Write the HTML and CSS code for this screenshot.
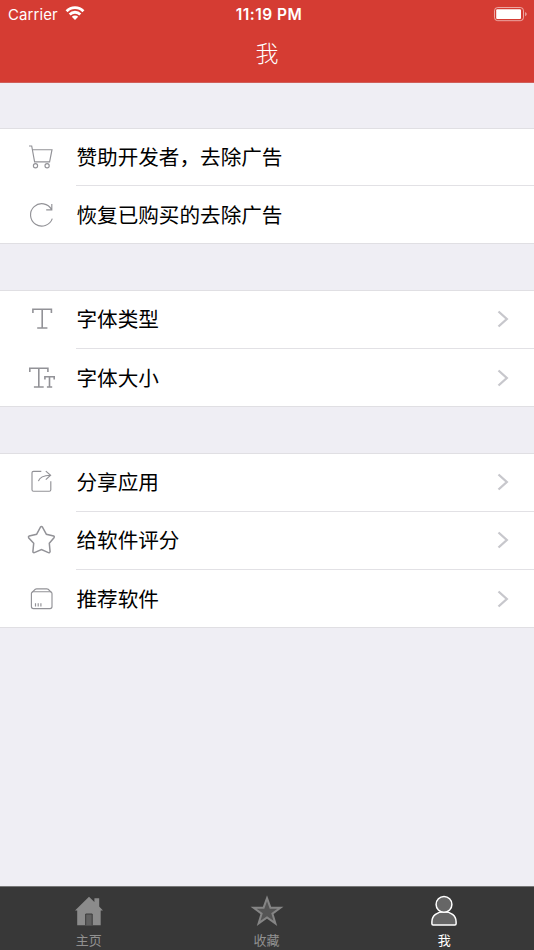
FILE: index.html
```html
<!DOCTYPE html>
<html lang="zh-CN">
<head>
  <meta charset="UTF-8" />
  <meta name="viewport" content="width=device-width, initial-scale=1.0"/>
  <title>我</title>
  <link rel="stylesheet" href="styles.css">
</head>
<body>
  <header class="header">
    <div class="status-bar">
      <div class="carrier">
        <span>Carrier</span>
        <svg width="20" height="16" viewBox="0 0 20 16" fill="none" stroke="#fff" stroke-width="2.8">
          <path d="M1.6 6.2a11.6 11.6 0 0 1 16.8 0M4.7 9.5a7.4 7.4 0 0 1 10.6 0"/>
          <path d="M10 15L6.8 11.8a4.5 4.5 0 0 1 6.4 0z" fill="#fff" stroke="none"/>
        </svg>
      </div>
      <span class="time">11:19 PM</span>
      <svg class="battery" width="34" height="16" viewBox="0 0 34 16">
        <rect x="1.5" y="1.5" width="29" height="13.2" rx="3.2" fill="none" stroke="#fff" stroke-opacity=".55"/>
        <rect x="3.2" y="3.3" width="24.8" height="9.6" rx="1" fill="#fff"/>
        <path d="M32.2 5.9q1.5.7 1.5 2.2t-1.5 2.2z" fill="#fff" fill-opacity=".6"/>
      </svg>
    </div>
    <h1 class="title">我</h1>
  </header>

  <main class="settings">
    <ul class="group">
      <li class="row">
        <svg class="icon" viewBox="0 0 32 32">
          <path d="M4 5h2.7l2.9 15.8h15L27 8.7H7.4"/>
          <circle cx="10.5" cy="24.7" r="2.1"/>
          <circle cx="22.1" cy="24.7" r="2.1"/>
        </svg>
        <span class="label">赞助开发者，去除广告</span>
      </li>
      <li class="row">
        <svg class="icon" viewBox="0 0 32 32">
          <path d="M27.3 19.6A11.2 11.2 0 1 1 26.6 10.6M26.8 5v5.8h-5.6"/>
        </svg>
        <span class="label">恢复已购买的去除广告</span>
      </li>
    </ul>

    <ul class="group">
      <li class="row">
        <svg class="icon" viewBox="0 0 32 32">
          <path class="glyph" d="M7.9 10.1V6.2h18.5v3.9M17.2 6.2V25M12.2 25h10.2"/>
        </svg>
        <span class="label">字体类型</span>
        <svg class="arrow" viewBox="0 0 12 18"><path d="M1.5 1.5L9.8 9l-8.3 7.5"/></svg>
      </li>
      <li class="row">
        <svg class="icon" viewBox="0 0 32 32">
          <path class="glyph" d="M4.8 10.1V6.2h18.1v3.9M13.8 6.2V25M8.9 25h9.8M19.9 17.5v-2.8h9.3v2.8M24.5 14.7V25M21.9 25h5.3"/>
        </svg>
        <span class="label">字体大小</span>
        <svg class="arrow" viewBox="0 0 12 18"><path d="M1.5 1.5L9.8 9l-8.3 7.5"/></svg>
      </li>
    </ul>

    <ul class="group">
      <li class="row">
        <svg class="icon" viewBox="0 0 32 32">
          <path d="M16.3 5.3H8.5q-1.5 0-1.5 1.5V23.7q0 1.5 1.5 1.5h15.8q1.5 0 1.5-1.5V15.2"/>
          <path d="M13.4 15.2q1.7-5.7 12-5.9M20.8 5.1l4.8 4.2-4.8 4.3"/>
        </svg>
        <span class="label">分享应用</span>
        <svg class="arrow" viewBox="0 0 12 18"><path d="M1.5 1.5L9.8 9l-8.3 7.5"/></svg>
      </li>
      <li class="row">
        <svg class="icon" viewBox="0 0 32 32">
          <path class="star" d="M15.3 3.3q1.2-1.4 2.3 0l3.8 7 7.2 1.6q1.2.6.4 1.8l-4.7 5.6.8 8.3q-.3 1.4-1.7 1l-6.9-3-7.1 3q-1.5.3-1.5-1.1l.8-8.2-5.1-5.6q-.6-1.2.6-1.8l7.4-1.6z"/>
        </svg>
        <span class="label">给软件评分</span>
        <svg class="arrow" viewBox="0 0 12 18"><path d="M1.5 1.5L9.8 9l-8.3 7.5"/></svg>
      </li>
      <li class="row">
        <svg class="icon" viewBox="0 0 32 32">
          <rect x="6.4" y="8.7" width="20.6" height="16.9" rx="2"/>
          <path d="M7 9.4l3.3-3.1q.6-.5 1.3-.5h10.2q.8 0 1.4.5l3.2 3.1M10.5 20.2v3.4M13.2 20.2v3.4M15.9 20.2v3.4"/>
        </svg>
        <span class="label">推荐软件</span>
        <svg class="arrow" viewBox="0 0 12 18"><path d="M1.5 1.5L9.8 9l-8.3 7.5"/></svg>
      </li>
    </ul>
  </main>

  <nav class="tab-bar">
    <a class="tab">
      <svg width="34" height="34" viewBox="0 0 34 34">
        <path d="M17 2.8l5.4 5.1V4.3h4.8v8.2l3.8 4.1h-2.3v14.6H5.2V16.6H3z" fill="#8b8b8b"/>
        <path d="M13.7 31.2V20h6.5v11.2" fill="#606060" stroke="#3a3a3a"/>
      </svg>
      <span>主页</span>
    </a>
    <a class="tab">
      <svg width="34" height="34" viewBox="0 0 34 34">
        <path d="M17 4.2l3.4 9.5h10l-8 5.9 3 9.8-8.4-5.9-8.4 5.9 3-9.8-8-5.9h10z" fill="#555" stroke="#858585" stroke-width="2"/>
      </svg>
      <span>收藏</span>
    </a>
    <a class="tab active">
      <svg width="34" height="34" viewBox="0 0 34 34" fill="#666" stroke="#fff" stroke-width="1.5">
        <path d="M4.9 29.7v-1.9C4.9 21.2 10.4 17.8 17 17.8s12.1 3.4 12.1 10v1.9q0 1.2-1.2 1.2H6.1q-1.2 0-1.2-1.2z"/>
        <circle cx="17" cy="10.4" r="7.9"/>
      </svg>
      <span>我</span>
    </a>
  </nav>
</body>
</html>
```

FILE: styles.css
```css
* {
  box-sizing: border-box;
}

body {
  margin: 0;
  height: 950px;
  display: flex;
  flex-direction: column;
  background: #efeef4;
  font-family: Inter, "Noto Sans CJK SC", sans-serif;
  color: #000;
}

.header {
  height: 83px;
  background: #d53c33;
  border-bottom: 1px solid #d05e59;
  color: #fff;
}

.status-bar {
  height: 28px;
  padding: 0 7px 0 8px;
  display: grid;
  grid-template-columns: 1fr auto 1fr;
  align-items: center;
  font-size: 15px;
}

.carrier {
  display: flex;
  align-items: center;
  gap: 7px;
  letter-spacing: 0.1px;
}

.carrier svg {
  margin-top: -3px;
}

.time {
  margin-left: 3px;
  font-size: 15.5px;
  font-weight: 600;
  letter-spacing: 0.45px;
}

.battery {
  justify-self: end;
  margin-top: -1px;
}

.title {
  margin: 0;
  font-size: 23px;
  font-weight: 300;
  line-height: 53px;
  text-align: center;
}

.settings {
  flex: 1;
  padding-top: 45px;
}

.group {
  margin: 0 0 46px;
  padding: 0;
  list-style: none;
  background: #fff;
  border-top: 1px solid #e0dfe3;
  border-bottom: 1px solid #e0dfe3;
}

.row {
  height: 58px;
  padding: 0 25px;
  display: flex;
  align-items: center;
  background: linear-gradient(#e2e1e5, #e2e1e5) 76px bottom / 100% 1px no-repeat;
}

.row:last-child {
  height: 57px;
  padding-top: 2px;
  background: none;
}

.group:first-child .row:first-child {
  height: 57px;
  padding-top: 1px;
}

.icon {
  width: 32px;
  height: 32px;
  margin: -2px 19.5px 0 0;
  fill: none;
  stroke: #929297;
  stroke-width: 1.15;
}

.icon .glyph {
  stroke-width: 1.6;
}

.icon .star {
  stroke-width: 1.5;
}

.label {
  flex: 1;
  font-size: 20.6px;
  line-height: 30px;
}

.arrow {
  width: 12px;
  height: 18px;
  margin-top: -2px;
  fill: none;
  stroke: #c7c7cc;
  stroke-width: 2.3;
}

.tab-bar {
  height: 64px;
  display: flex;
  background: #383838;
  border-top: 1px solid #777;
}

.tab {
  flex: 1;
  padding-top: 7px;
  display: flex;
  flex-direction: column;
  align-items: center;
  font-size: 13px;
  line-height: 24px;
  color: #919191;
}

.tab svg {
  flex-shrink: 0;
}

.tab.active {
  padding-right: 1px;
  color: #fff;
}
```
